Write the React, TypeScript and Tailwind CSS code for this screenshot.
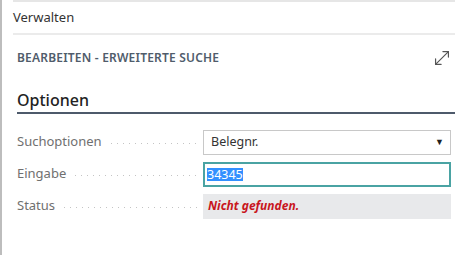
import { MoveDiagonal } from 'lucide-react';

const font = { fontFamily: '"Noto Sans", "Open Sans", sans-serif' };

function Row({ label, children }: { label: string; children: React.ReactNode }) {
  return (
    <div className="flex items-center h-8">
      <div className="flex items-center w-[186px] shrink-0 text-[13px] text-[#707070]">
        <span>{label}</span>
        <span className="flex-1 ml-[9px] mr-[2px] mt-[3px] h-px bg-[linear-gradient(to_right,#c4c4c4_1px,transparent_1px)] bg-[length:6px_1px]" />
      </div>
      <div className="flex-1">{children}</div>
    </div>
  );
}

export default function App() {
  return (
    <div className="w-[465px] h-[255px] bg-white flex" style={font}>
      <div className="w-[2px] bg-[#bdbdbd] shrink-0" />
      <div className="flex-1 pl-[11px] pr-[10px]">
        <div className="h-[2px] bg-[#e6e6e6]" />
        <div className="h-[31px] flex items-center text-[13px] text-[#333]">Verwalten</div>
        <div className="h-[2px] bg-[#ebebeb]" />
        <div className="pl-[4px]">
          <div className="h-[45px] flex items-center justify-between pr-[2px]">
            <span className="text-[12px] font-semibold tracking-[0.2px] text-[#505c6b]">
              BEARBEITEN - ERWEITERTE SUCHE
            </span>
            <MoveDiagonal size={22} strokeWidth={1.3} className="text-[#555]" />
          </div>
          <div className="pt-[9px] h-[34px] border-b-2 border-[#4e5a6b]">
            <div className="text-[16px] leading-[22px] font-medium text-[#222]">Optionen</div>
          </div>
          <div className="pt-[12px] pr-[4px]">
            <Row label="Suchoptionen">
              <div className="h-[25px] border border-[#c8c8c8] flex items-center justify-between pl-[7px] pr-[6px] text-[12.5px] text-[#333]">
                <span>Belegnr.</span>
                <span className="text-[9px] text-[#222]">▼</span>
              </div>
            </Row>
            <Row label="Eingabe">
              <div className="h-[25px] border-2 border-[#4aa3a3] flex items-center px-[2px] text-[12.5px]">
                <span className="bg-[#3390ff] text-white leading-[13px]">34345</span>
              </div>
            </Row>
            <Row label="Status">
              <div className="h-[25px] bg-[#e8e9eb] flex items-center px-[5px] text-[12px] font-bold italic text-[#c8161d]">
                Nicht gefunden.
              </div>
            </Row>
          </div>
        </div>
      </div>
    </div>
  );
}
